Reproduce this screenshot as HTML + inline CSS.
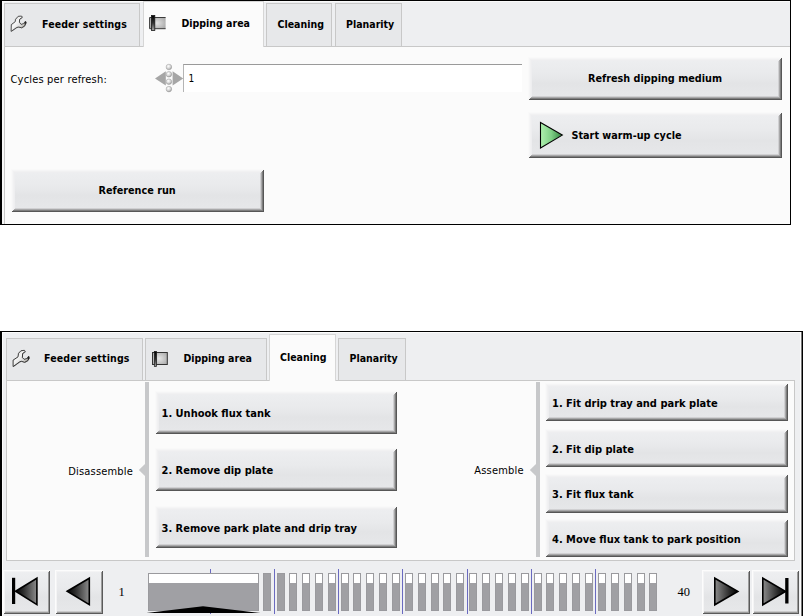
<!DOCTYPE html>
<html>
<head>
<meta charset="utf-8">
<title>Dipping unit</title>
<style>
html,body{margin:0;padding:0;background:#fff;}
body{width:803px;height:616px;position:relative;overflow:hidden;font-family:"DejaVu Sans Condensed","DejaVu Sans","Liberation Sans",sans-serif;font-size:11px;color:#000;font-stretch:condensed;}
div,span,svg{position:absolute;box-sizing:border-box;}
.panel{background:#eeeff1;overflow:hidden;}
.tab{background:#e7e8ea;border:1px solid #c8c8c8;border-bottom:none;font-weight:bold;font-size:10.5px;white-space:nowrap;line-height:13px;}
.tab.sel{background:#fbfbfb;border-color:#d6d6d6;}
.pane{background:#fbfbfb;border:1px solid #c8c8c8;}
.btn{background:linear-gradient(#eeeff1 0%,#e9eaec 40%,#e3e4e6 62%,#e7e8ea 100%);font-weight:bold;white-space:nowrap;line-height:13px;
 box-shadow:inset 1px 1px 0 #f9f9f9,inset -1px -1px 0 #565656,inset 2px 2px 0 #f5f5f6,inset -2px -2px 0 #7e7e7e,inset 3px 3px 0 #f1f1f2,inset -3px -3px 0 #a8a8a9,inset 4px 4px 0 #eeeef0,inset -4px -4px 0 #d0d0d2;}
.nbtn{background:linear-gradient(#eeeff1 0%,#e9eaec 40%,#e3e4e6 62%,#e7e8ea 100%);box-shadow:inset 1px 1px 0 #fcfcfc,inset -1px -1px 0 #5a5a5a,inset 2px 2px 0 #f4f4f5,inset -2px -2px 0 #9c9c9c,inset 0 -3px 0 #cacacb;}
.btn span,.tab span{white-space:nowrap;}
.lbl{white-space:nowrap;font-size:11px;line-height:14px;letter-spacing:0.18px;}
.vbar{background:#c7c8ca;}
.num{font-family:"Liberation Serif",serif;font-stretch:normal;font-size:12.5px;line-height:14px;white-space:nowrap;}
.bar{background:#a0a0a4;border:1px solid #9a9a9e;}
.bar i{position:absolute;left:0;top:0;right:0;height:9px;background:#fff;display:block;}
.tick{background:#6a6ac0;width:1px;}
</style>
</head>
<body>
<!-- PANEL 1 -->
<div class="panel" style="left:0;top:0;width:791px;height:225px;border-left:2px solid #000;border-top:1px solid #000;border-right:1px solid #000;border-bottom:1px solid #000;">
<div style="left:0;top:0;width:2px;height:223px;background:#f8f8f8"></div><div style="left:0;top:0;width:800px;height:1px;background:#fafafa"></div>
<div class="pane" style="left:2px;top:45px;width:800px;height:200px"></div>
<div class="tab" style="left:2px;top:2px;width:136px;height:43px"><span style="left:37px;top:13.5px;letter-spacing:0.1px">Feeder settings</span></div>
<div class="tab sel" style="left:141px;top:0px;width:121px;height:46px"><span style="left:37.5px;top:15px">Dipping area</span></div>
<div class="tab" style="left:264px;top:2px;width:66px;height:43px"><span style="left:10.5px;top:13.5px">Cleaning</span></div>
<div class="tab" style="left:333px;top:2px;width:67px;height:43px"><span style="left:10px;top:13.5px">Planarity</span></div>
<svg style="left:8px;top:14px" width="18" height="18" viewBox="10 15 18 18"><defs><linearGradient id="wg1" x1="0.1" y1="0.2" x2="0.9" y2="0.9"><stop offset="0" stop-color="#c9c9c9"/><stop offset="0.3" stop-color="#f6f6f6"/><stop offset="0.6" stop-color="#dedede"/><stop offset="0.85" stop-color="#b0aca4"/><stop offset="1" stop-color="#6a6660"/></linearGradient></defs><path d="M11.6 31.8 L11.8 25 L15.6 22.1 L15.9 19.7 L18.6 16.7 L22 16.5 L22.7 17.7 L20 19.7 L19.8 22.6 L21.5 24.8 L23.9 24 L25.9 21.6 L26.6 23.1 L24.9 26.5 L22 28.2 L19 27.4 L17.1 27.9 Z" fill="#555" opacity="0.55"/><path d="M11.1 31.4 L11.3 24.6 L15.2 21.7 L15.5 19.3 L18.2 16.3 L21.6 16.1 L22.3 17.3 L19.6 19.3 L19.4 22.2 L21.1 24.4 L23.5 23.6 L25.5 21.2 L26.2 22.7 L24.5 26.1 L21.6 27.8 L18.6 27 L16.7 27.5 Z" fill="url(#wg1)" stroke="#333" stroke-width="0.85" stroke-linejoin="round"/><path d="M25.5 21.2 L26.2 22.7 L25 25 L24.3 23.2 Z" fill="#222"/></svg><svg style="left:147px;top:13.5px" width="18" height="17" viewBox="0 0 18 17"><defs><radialGradient id="dg1" cx="0.45" cy="0.5" r="0.7"><stop offset="0" stop-color="#e4e4e4"/><stop offset="1" stop-color="#a4a4a4"/></radialGradient><linearGradient id="db1" x1="0" y1="0" x2="0" y2="1"><stop offset="0" stop-color="#000"/><stop offset="0.5" stop-color="#333"/><stop offset="1" stop-color="#aaa"/></linearGradient></defs><rect x="0.6" y="2.5" width="16" height="11.2" fill="url(#dg1)"/><path d="M16.6 2.5 H0.6 V13.7 H16.6" fill="none" stroke="#3a3a3a" stroke-width="1"/><rect x="2.4" y="0.5" width="3.4" height="15" fill="url(#db1)" stroke="#1a1a1a" stroke-width="0.8"/></svg><span class="lbl" style="left:8.5px;top:72px">Cycles per refresh:</span>
<svg style="left:152px;top:62px" width="31" height="31" viewBox="154 63 31 31"><defs><radialGradient id="sp" cx="0.4" cy="0.35" r="0.65"><stop offset="0" stop-color="#ffffff"/><stop offset="0.6" stop-color="#d4d4d4"/><stop offset="1" stop-color="#9c9c9c"/></radialGradient></defs><path d="M155 78.4 L165.8 71.2 V85.6 Z M183.2 78.4 L172.6 71.2 V85.6 Z" fill="#a6a6a6"/><circle cx="168.9" cy="67" r="2.8" fill="url(#sp)" stroke="#a0a0a0" stroke-width="0.5"/><circle cx="168.9" cy="74.3" r="2.8" fill="url(#sp)" stroke="#a0a0a0" stroke-width="0.5"/><circle cx="168.9" cy="81.7" r="2.8" fill="url(#sp)" stroke="#a0a0a0" stroke-width="0.5"/><circle cx="168.9" cy="89.1" r="2.8" fill="url(#sp)" stroke="#a0a0a0" stroke-width="0.5"/></svg>
<div style="left:181px;top:63px;width:339px;height:28px;background:#fff;border-top:1px solid #9a9a9a;border-left:1px solid #b4b4b4;font-size:10px;line-height:13px"><span style="left:4.5px;top:7px">1</span></div>
<div class="btn" style="left:526px;top:56px;width:254px;height:43px;font-size:10.75px"><span style="left:60px;top:15px">Refresh dipping medium</span></div>
<div class="btn" style="left:526px;top:111px;width:254px;height:46px;font-size:10.75px"><svg style="left:10px;top:7.5px" width="27" height="30" viewBox="538 119.5 27 30"><defs><linearGradient id="gg" x1="0" y1="0" x2="1" y2="0"><stop offset="0" stop-color="#aef0ae"/><stop offset="0.5" stop-color="#7fcf86"/><stop offset="1" stop-color="#2f7f3c"/></linearGradient></defs><path d="M540.5 122 V147.5 L562.3 134.6 Z" fill="url(#gg)" stroke="#000" stroke-width="1.1" stroke-linejoin="miter"/></svg><span style="left:43.5px;top:16.5px">Start warm-up cycle</span></div>
<div class="btn" style="left:9px;top:168px;width:253px;height:43px;font-size:10.75px"><span style="left:87.5px;top:15px">Reference run</span></div>
</div>

<!-- PANEL 2 -->
<div class="panel" style="left:0;top:331px;width:803px;height:290px;border-left:2px solid #000;border-top:1px solid #000;border-right:1px solid #000;">
<div style="left:0;top:0;width:1px;height:290px;background:#fcfcfc"></div><div style="left:0;top:0;width:803px;height:1px;background:#fcfcfc"></div><div style="left:798px;top:0;width:1px;height:290px;background:#fcfcfc"></div><div style="left:799px;top:0;width:1px;height:290px;background:#777"></div>
<div class="pane" style="left:4px;top:48px;width:789px;height:181px"></div>
<div class="tab" style="left:4px;top:6px;width:137px;height:42px"><span style="left:37px;top:13px;letter-spacing:0.15px">Feeder settings</span></div>
<div class="tab" style="left:143px;top:6px;width:122px;height:42px"><span style="left:37.5px;top:13px">Dipping area</span></div>
<div class="tab sel" style="left:267px;top:2px;width:67px;height:47px"><span style="left:10px;top:16px">Cleaning</span></div>
<div class="tab" style="left:336px;top:6px;width:68px;height:42px"><span style="left:10.5px;top:13px">Planarity</span></div>
<svg style="left:5.5px;top:12px" width="30" height="30" viewBox="0 0 30 30"><defs><linearGradient id="wh" x1="0.1" y1="0.2" x2="0.9" y2="0.9"><stop offset="0" stop-color="#c4c4c4"/><stop offset="0.3" stop-color="#f4f4f4"/><stop offset="0.6" stop-color="#dcdcdc"/><stop offset="0.85" stop-color="#aca8a0"/><stop offset="1" stop-color="#66625c"/></linearGradient></defs><path d="M5.6 23 L5.6 16.5 L10.5 13.3 L11 9.7 L13.4 7.2 L16.8 6.7 L17.8 7.9 L15.1 9.9 L14.9 14 L16.6 15.7 L19.3 15 L21.2 12.6 L21.7 14.5 L20 17.2 L17.1 18.7 L13.9 17.7 L12.2 18.2 Z" fill="#444" opacity="0.6"/><path d="M5.1 22.6 L5.1 16.1 L10 12.9 L10.5 9.3 L12.9 6.8 L16.3 6.3 L17.3 7.5 L14.6 9.5 L14.4 13.6 L16.1 15.3 L18.8 14.6 L20.7 12.2 L21.2 14.1 L19.5 16.8 L16.6 18.3 L13.4 17.3 L11.7 17.8 Z" fill="url(#wh)" stroke="#2a2a2a" stroke-width="0.9" stroke-linejoin="round"/><path d="M20.7 12.2 L21.2 14.1 L20.2 16 L19.6 14.2 Z" fill="#1a1a1a"/></svg><svg style="left:144px;top:12px" width="30" height="30" viewBox="0 0 30 30"><defs><radialGradient id="dh" cx="0.45" cy="0.5" r="0.7"><stop offset="0" stop-color="#e6e6e6"/><stop offset="1" stop-color="#a8a8a8"/></radialGradient><linearGradient id="di" x1="0" y1="0" x2="0" y2="1"><stop offset="0" stop-color="#000"/><stop offset="0.5" stop-color="#2a2a2a"/><stop offset="1" stop-color="#a0a0a0"/></linearGradient></defs><rect x="6.5" y="8.5" width="14.8" height="12" fill="url(#dh)" stroke="#333" stroke-width="1"/><rect x="8.3" y="7.4" width="2.3" height="15.2" fill="url(#di)" stroke="#1a1a1a" stroke-width="0.7"/></svg><div class="vbar" style="left:143px;top:50px;width:4px;height:175px"></div>
<div class="vbar" style="left:534px;top:50px;width:4px;height:175px"></div>
<svg style="left:136px;top:129.5px" width="8" height="16" viewBox="0 0 8 16"><path d="M0.8 8 L8 1 V15 Z" fill="#c7c8ca"/></svg>
<svg style="left:527px;top:129.5px" width="8" height="16" viewBox="0 0 8 16"><path d="M0.8 8 L8 1 V15 Z" fill="#c7c8ca"/></svg>
<span class="lbl" style="left:66.3px;top:132.60000000000002px">Disassemble</span>
<span class="lbl" style="left:472.3px;top:132.39999999999998px">Assemble</span>
<div class="btn" style="left:153px;top:59px;width:242px;height:43px;font-size:11px"><span style="left:6.5px;top:15.5px">1. Unhook flux tank</span></div>
<div class="btn" style="left:153px;top:116px;width:242px;height:43px;font-size:11px"><span style="left:6.5px;top:15.5px">2. Remove dip plate</span></div>
<div class="btn" style="left:153px;top:174px;width:242px;height:42px;font-size:11px"><span style="left:6.5px;top:15.5px">3. Remove park plate and drip tray</span></div>
<div class="btn" style="left:543px;top:51px;width:243px;height:38px;font-size:11px"><span style="left:7px;top:13.5px">1. Fit drip tray and park plate</span></div>
<div class="btn" style="left:543px;top:97px;width:243px;height:38px;font-size:11px"><span style="left:7px;top:13.5px">2. Fit dip plate</span></div>
<div class="btn" style="left:543px;top:142px;width:243px;height:39px;font-size:11px"><span style="left:7px;top:13.5px">3. Fit flux tank</span></div>
<div class="btn" style="left:543px;top:187px;width:243px;height:38px;font-size:11px"><span style="left:7px;top:13.5px">4. Move flux tank to park position</span></div>
<svg style="left:0;top:0" width="0" height="0"><defs><linearGradient id="nl" x1="0" y1="0" x2="1" y2="0"><stop offset="0" stop-color="#000"/><stop offset="0.35" stop-color="#2a2a2a"/><stop offset="1" stop-color="#8c8c8c"/></linearGradient><linearGradient id="nr" x1="1" y1="0" x2="0" y2="0"><stop offset="0" stop-color="#000"/><stop offset="0.35" stop-color="#2a2a2a"/><stop offset="1" stop-color="#8c8c8c"/></linearGradient></defs></svg>
<div class="nbtn" style="left:1px;top:238px;width:47px;height:44px"><svg style="left:0;top:0" width="47" height="44" viewBox="3 570 47 44"><path d="M15.6 591.2 L36.9 578.2 V604.6 Z" fill="url(#nl)" stroke="#000" stroke-width="1.6"/><rect x="12" y="577.8" width="3.2" height="26.2" fill="#000"/></svg></div>
<div class="nbtn" style="left:53px;top:238px;width:48px;height:44px"><svg style="left:0;top:0" width="47" height="44" viewBox="55 570 47 44"><path d="M67.2 591.2 L89.3 578.2 V604.6 Z" fill="url(#nl)" stroke="#000" stroke-width="1.6"/></svg></div>
<div class="nbtn" style="left:700px;top:238px;width:48px;height:44px"><svg style="left:0;top:0" width="47" height="44" viewBox="702 570 47 44"><path d="M737.8 591.4 L714.8 578.2 V604.8 Z" fill="url(#nr)" stroke="#000" stroke-width="1.6"/></svg></div>
<div class="nbtn" style="left:750px;top:238px;width:47px;height:44px"><svg style="left:0;top:0" width="47" height="44" viewBox="752 570 47 44"><path d="M785.5 591.4 L762.8 578.2 V604.8 Z" fill="url(#nr)" stroke="#000" stroke-width="1.6"/><rect x="785.2" y="578" width="3.3" height="25.5" fill="#000"/></svg></div>
<span class="num" style="left:116.5px;top:253px">1</span>
<span class="num" style="left:675.5px;top:253px">40</span>
<div class="tick" style="left:208px;top:237px;height:45px"></div><div class="tick" style="left:272px;top:237px;height:45px"></div><div class="tick" style="left:336px;top:237px;height:45px"></div><div class="tick" style="left:400px;top:237px;height:45px"></div><div class="tick" style="left:465px;top:237px;height:45px"></div><div class="tick" style="left:529px;top:237px;height:45px"></div><div class="tick" style="left:593px;top:237px;height:45px"></div>
<div class="bar" style="left:261px;top:241px;width:8px;height:38px"></div><div class="bar" style="left:275px;top:241px;width:8px;height:38px"></div><div class="bar" style="left:287px;top:241px;width:8px;height:38px"><i></i></div><div class="bar" style="left:300px;top:241px;width:8px;height:38px"><i></i></div><div class="bar" style="left:313px;top:241px;width:8px;height:38px"><i></i></div><div class="bar" style="left:326px;top:241px;width:8px;height:38px"><i></i></div><div class="bar" style="left:339px;top:241px;width:8px;height:38px"><i></i></div><div class="bar" style="left:351px;top:241px;width:8px;height:38px"><i></i></div><div class="bar" style="left:364px;top:241px;width:8px;height:38px"><i></i></div><div class="bar" style="left:377px;top:241px;width:8px;height:38px"><i></i></div><div class="bar" style="left:390px;top:241px;width:8px;height:38px"><i></i></div><div class="bar" style="left:403px;top:241px;width:8px;height:38px"><i></i></div><div class="bar" style="left:416px;top:241px;width:8px;height:38px"><i></i></div><div class="bar" style="left:429px;top:241px;width:8px;height:38px"><i></i></div><div class="bar" style="left:441px;top:241px;width:8px;height:38px"><i></i></div><div class="bar" style="left:454px;top:241px;width:8px;height:38px"><i></i></div><div class="bar" style="left:467px;top:241px;width:8px;height:38px"><i></i></div><div class="bar" style="left:480px;top:241px;width:8px;height:38px"><i></i></div><div class="bar" style="left:493px;top:241px;width:8px;height:38px"><i></i></div><div class="bar" style="left:506px;top:241px;width:8px;height:38px"><i></i></div><div class="bar" style="left:519px;top:241px;width:8px;height:38px"><i></i></div><div class="bar" style="left:532px;top:241px;width:8px;height:38px"><i></i></div><div class="bar" style="left:544px;top:241px;width:8px;height:38px"><i></i></div><div class="bar" style="left:557px;top:241px;width:8px;height:38px"><i></i></div><div class="bar" style="left:570px;top:241px;width:8px;height:38px"><i></i></div><div class="bar" style="left:583px;top:241px;width:8px;height:38px"><i></i></div><div class="bar" style="left:596px;top:241px;width:8px;height:38px"><i></i></div><div class="bar" style="left:609px;top:241px;width:8px;height:38px"><i></i></div><div class="bar" style="left:622px;top:241px;width:8px;height:38px"><i></i></div><div class="bar" style="left:635px;top:241px;width:8px;height:38px"><i></i></div><div class="bar" style="left:647px;top:241px;width:8px;height:38px"><i></i></div>
<div class="bar" style="left:146.2px;top:241px;width:110.6px;height:38px"><i></i></div>
<svg style="left:144px;top:273px" width="116" height="9" viewBox="146 605 116 9"><path d="M146.3 613 L203 606.3 L260.5 613 Z" fill="#000"/></svg>
</div>

</body>
</html>
